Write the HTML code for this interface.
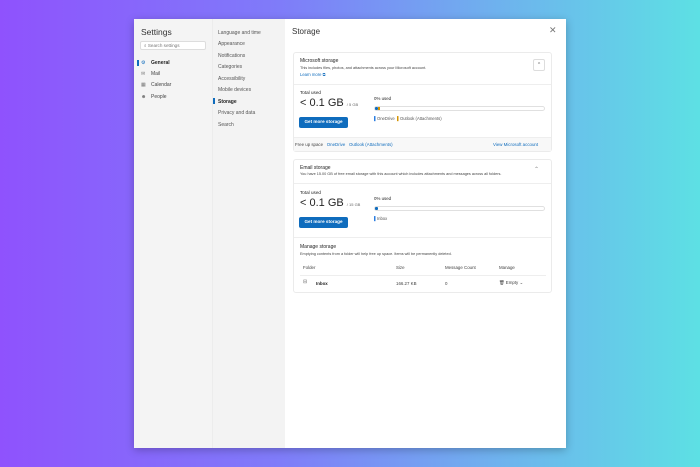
<!DOCTYPE html>
<html><head><style>
*{margin:0;padding:0;box-sizing:border-box}
body{width:700px;height:467px;overflow:hidden;background:linear-gradient(90deg,#8f52fd 0%,#7f7cf9 40%,#6fb0ee 70%,#5de0e4 100%);font-family:"Liberation Sans",sans-serif;color:#242424;position:relative}
.a{position:absolute}
.dlg{left:134px;top:19px;width:432px;height:429px;background:#fff;box-shadow:0 2px 8px rgba(0,0,0,.25)}
.c1{left:0;top:0;width:78px;height:429px;background:#f4f4f4}
.c2{left:78px;top:0;width:73px;height:429px;background:#f3f3f3;border-left:1px solid #ececec}
.t{font-size:5px;white-space:nowrap}
.card{background:#fff;border:1px solid #ebebeb;border-radius:3px}
.btn{background:#0f6cbd;color:#fff;font-size:4.6px;font-weight:bold;border-radius:2px;text-align:center;line-height:10px}
.lnk{color:#0f6cbd}
.bar{height:5px;border:1px solid #e0e0e0;border-radius:3px;background:#fff}
</style></head><body>
<div class="a dlg">
 <div class="a c1"></div><div class="a c2"></div>
 <div class="a" style="left:7px;top:8px;font-size:8.5px;color:#333">Settings</div>
 <div class="a" style="left:6px;top:22px;width:66px;height:9px;background:#fff;border:1px solid #ddd;border-radius:2px"></div>
 <div class="a t" style="left:10px;top:24px;color:#777;font-size:4.6px">⌕ Search settings</div>
 <div class="a" style="left:3px;top:41px;width:1.5px;height:6px;background:#0f6cbd"></div>
 <div class="a t" style="left:7px;top:41px;color:#0f6cbd">⚙</div>
 <div class="a t" style="left:17px;top:41px;font-weight:bold">General</div>
 <div class="a t" style="left:7px;top:52px;color:#777">✉</div><div class="a t" style="left:17px;top:52px;color:#444">Mail</div>
 <div class="a t" style="left:7px;top:63px;color:#777">▦</div><div class="a t" style="left:17px;top:63px;color:#444">Calendar</div>
 <div class="a t" style="left:7px;top:75px;color:#777">☻</div><div class="a t" style="left:17px;top:75px;color:#444">People</div>
 <div class="a t" style="left:84px;top:11px;color:#555">Language and time</div>
 <div class="a t" style="left:84px;top:22px;color:#555">Appearance</div>
 <div class="a t" style="left:84px;top:34px;color:#555">Notifications</div>
 <div class="a t" style="left:84px;top:45px;color:#555">Categories</div>
 <div class="a t" style="left:84px;top:57px;color:#555">Accessibility</div>
 <div class="a t" style="left:84px;top:68px;color:#555">Mobile devices</div>
 <div class="a" style="left:79px;top:79px;width:1.5px;height:6px;background:#0f6cbd"></div>
 <div class="a t" style="left:84px;top:80px;font-weight:bold">Storage</div>
 <div class="a t" style="left:84px;top:91px;color:#555">Privacy and data</div>
 <div class="a t" style="left:84px;top:103px;color:#555">Search</div>
 <div class="a" style="left:158px;top:8px;font-size:8px;color:#333">Storage</div>
 <div class="a" style="left:415px;top:6px;font-size:9px;color:#777">✕</div>

 <div class="a card" style="left:159px;top:33px;width:259px;height:100px"></div>
 <div class="a" style="left:160px;top:118px;width:257px;height:14px;background:#f8f8f8;border-top:1px solid #eee"></div>
 <div class="a t" style="left:166px;top:39px;font-size:5px">Microsoft storage</div>
 <div class="a t" style="left:166px;top:47px;font-size:3.8px;color:#444">This includes files, photos, and attachments across your Microsoft account.</div>
 <div class="a t lnk" style="left:166px;top:53px;font-size:4.2px">Learn more ⧉</div>
 <div class="a" style="left:399px;top:40px;width:12px;height:12px;border:1px solid #ddd;border-radius:2px;font-size:5px;color:#666;text-align:center;line-height:10px">^</div>
 <div class="a" style="left:160px;top:65px;width:257px;height:1px;background:#eee"></div>
 <div class="a t" style="left:166px;top:71px;font-size:4.6px">Total used</div>
 <div class="a t" style="left:166px;top:78px;font-size:11px">&lt; 0.1 GB <span style="font-size:4px;color:#666">/ 5 GB</span></div>
 <div class="a btn" style="left:165px;top:98px;width:49px;height:11px">Get more storage</div>
 <div class="a t" style="left:240px;top:77px;font-size:4.4px">0% used</div>
 <div class="a bar" style="left:240px;top:87px;width:171px"></div>
 <div class="a" style="left:241px;top:88px;width:3px;height:3px;background:#0f6cbd;border-radius:1px"></div>
 <div class="a" style="left:244px;top:88px;width:2px;height:3px;background:#d59300"></div>
 <div class="a t" style="left:240px;top:97px;font-size:4.2px;color:#555"><span style="color:#2a7de1">▌</span>OneDrive &nbsp;<span style="color:#d59300">▌</span>Outlook (Attachments)</div>
 <div class="a t" style="left:161px;top:123px;font-size:4.4px;color:#444">Free up space &nbsp; <span class="lnk">OneDrive</span> &nbsp; <span class="lnk">Outlook (Attachments)</span></div>
 <div class="a t lnk" style="left:359px;top:123px;font-size:4.4px">View Microsoft account</div>

 <div class="a card" style="left:159px;top:140px;width:259px;height:134px"></div>
 <div class="a t" style="left:166px;top:146px;font-size:5px">Email storage</div>
 <div class="a t" style="left:166px;top:153px;font-size:3.8px;color:#444">You have 15.00 GB of free email storage with this account which includes attachments and messages across all folders.</div>
 <div class="a t" style="left:400px;top:147px;font-size:6px;color:#888">⌃</div>
 <div class="a" style="left:160px;top:164px;width:257px;height:1px;background:#eee"></div>
 <div class="a t" style="left:166px;top:171px;font-size:4.6px">Total used</div>
 <div class="a t" style="left:166px;top:178px;font-size:11px">&lt; 0.1 GB <span style="font-size:4px;color:#666">/ 15 GB</span></div>
 <div class="a btn" style="left:165px;top:198px;width:49px;height:11px">Get more storage</div>
 <div class="a t" style="left:240px;top:177px;font-size:4.4px">0% used</div>
 <div class="a bar" style="left:240px;top:187px;width:171px"></div>
 <div class="a" style="left:241px;top:188px;width:3px;height:3px;background:#0f6cbd;border-radius:1px"></div>
 <div class="a t" style="left:240px;top:197px;font-size:4.2px;color:#555"><span style="color:#2a7de1">▌</span>Inbox</div>
 <div class="a" style="left:160px;top:218px;width:257px;height:1px;background:#eee"></div>
 <div class="a t" style="left:166px;top:225px;font-size:5px">Manage storage</div>
 <div class="a t" style="left:166px;top:233px;font-size:3.8px;color:#444">Emptying contents from a folder will help free up space. Items will be permanently deleted.</div>
 <div class="a t" style="left:169px;top:246px;font-size:4.4px;color:#444">Folder</div>
 <div class="a t" style="left:262px;top:246px;font-size:4.4px;color:#444">Size</div>
 <div class="a t" style="left:311px;top:246px;font-size:4.4px;color:#444">Message Count</div>
 <div class="a t" style="left:365px;top:246px;font-size:4.4px;color:#444">Manage</div>
 <div class="a" style="left:166px;top:256px;width:246px;height:1px;background:#eee"></div>
 <div class="a t" style="left:169px;top:260px;font-size:5px;color:#666">⊟</div>
 <div class="a t" style="left:182px;top:262px;font-size:4.4px;font-weight:bold">Inbox</div>
 <div class="a t" style="left:262px;top:262px;font-size:4.4px;color:#444">166.27 KB</div>
 <div class="a t" style="left:311px;top:262px;font-size:4.4px;color:#444">0</div>
 <div class="a t" style="left:365px;top:261px;font-size:4.4px;color:#444">🗑 Empty ⌄</div>
</div>
</body></html>
